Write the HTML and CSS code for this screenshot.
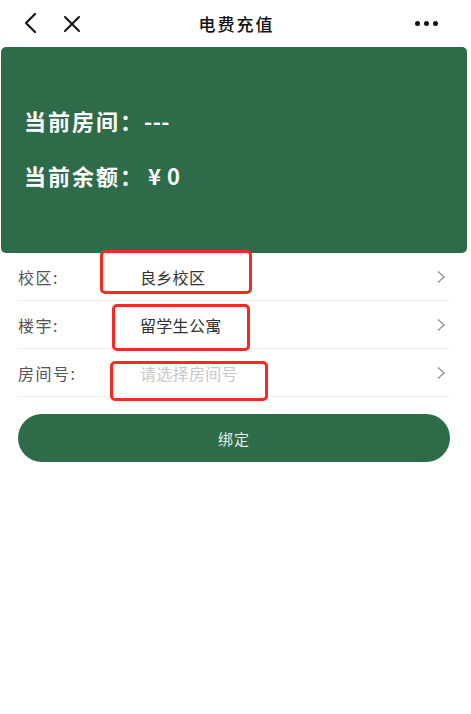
FILE: index.html
```html
<!DOCTYPE html>
<html lang="zh">
<head>
<meta charset="utf-8">
<title>电费充值</title>
<link rel="stylesheet" href="styles.css">
</head>
<body>
<header class="nav">
  <div class="nav-left">
    <svg class="icon" width="16" height="22" viewBox="0 0 16 22"><path d="M12 2 L3 11 L12 20" fill="none" stroke="#111" stroke-width="2.2" stroke-linecap="round" stroke-linejoin="round"/></svg>
    <svg class="icon close" width="18" height="18" viewBox="0 0 18 18"><path d="M2 2 L16 16 M16 2 L2 16" fill="none" stroke="#111" stroke-width="2" stroke-linecap="round"/></svg>
  </div>
  <div class="nav-title">电费充值</div>
  <div class="nav-right">
    <span class="dot"></span><span class="dot"></span><span class="dot"></span>
  </div>
</header>

<section class="card">
  <p class="card-line">当前房间：<span class="dash">---</span></p>
  <p class="card-line">当前余额：<span class="yen">¥</span>0</p>
</section>

<ul class="form">
  <li class="row">
    <span class="label">校区:</span>
    <span class="value">良乡校区</span>
    <span class="mark m1"></span>
    <svg class="chev" width="10" height="14" viewBox="0 0 10 14"><path d="M2 1.5 L8 7 L2 12.5" fill="none" stroke="#999" stroke-width="1.5"/></svg>
  </li>
  <li class="row">
    <span class="label">楼宇:</span>
    <span class="value">留学生公寓</span>
    <span class="mark m2"></span>
    <svg class="chev" width="10" height="14" viewBox="0 0 10 14"><path d="M2 1.5 L8 7 L2 12.5" fill="none" stroke="#999" stroke-width="1.5"/></svg>
  </li>
  <li class="row">
    <span class="label">房间号:</span>
    <span class="value placeholder">请选择房间号</span>
    <span class="mark m3"></span>
    <svg class="chev" width="10" height="14" viewBox="0 0 10 14"><path d="M2 1.5 L8 7 L2 12.5" fill="none" stroke="#999" stroke-width="1.5"/></svg>
  </li>
</ul>

<button class="btn">绑定</button>
</body>
</html>
```

FILE: styles.css
```css
* { box-sizing: border-box; }
html, body { margin: 0; padding: 0; background: #fff; }
body {
  font-family: "Noto Sans CJK SC", "Noto Sans", sans-serif;
  width: 471px;
  color: #333;
}
.nav {
  height: 46px;
  display: flex;
  align-items: center;
  justify-content: space-between;
  padding: 0 33px 0 23px;
  position: relative;
}
.nav-left { display: flex; align-items: center; gap: 24px; }
.nav-left .icon { display: block; }
.nav-left .close { margin-top: 1px; }
.nav-title {
  position: absolute;
  left: 0; right: 0;
  text-align: center;
  font-size: 17px;
  font-weight: 500;
  letter-spacing: 2px;
  padding-left: 2px;
  color: #111;
  pointer-events: none;
}
.nav-right { display: flex; gap: 4px; align-items: center; margin-top: 1px; }
.dot { width: 5px; height: 5px; border-radius: 50%; background: #111; display: block; }

.card {
  margin: 1px 4px 0 1px;
  height: 206px;
  background: #2e6b48;
  border-radius: 5px;
  padding: 59px 23px 0;
  color: #fff;
}
.card-line {
  margin: 0 0 27px;
  font-size: 22px;
  font-weight: 700;
  line-height: 28px;
  letter-spacing: 2px;
}
.dash { letter-spacing: 0.5px; }
.yen { margin-left: 4px; letter-spacing: 6px; }

.form { list-style: none; margin: 0 21px 0 18px; padding: 0; }
.row {
  position: relative;
  height: 48px;
  display: flex;
  align-items: center;
  border-bottom: 1px solid #eeeeee;
  font-size: 16px;
}
.label { width: 122px; color: #555; letter-spacing: 1.5px; }
.value { flex: 1; font-size: 16px; color: #333; letter-spacing: 0.3px; }
.value.placeholder { color: #c8c8c8; }
.chev { margin-right: 4px; }
.mark {
  position: absolute;
  border: 3.5px solid #f52a22;
  border-radius: 5px;
}
.m1 { left: 82px; top: -3px; width: 152px; height: 44px; }
.m2 { left: 94px; top: 3px; width: 138px; height: 47px; }
.m3 { left: 92px; top: 12px; width: 158px; height: 40px; }

.btn {
  display: block;
  margin: 17px 0 0 18px;
  width: 432px;
  height: 48px;
  border: none;
  border-radius: 24px;
  background: #2e6b48;
  color: #e6efe9;
  font-family: "Noto Sans CJK SC", sans-serif;
  font-size: 15px;
  letter-spacing: 1px;
}
```
